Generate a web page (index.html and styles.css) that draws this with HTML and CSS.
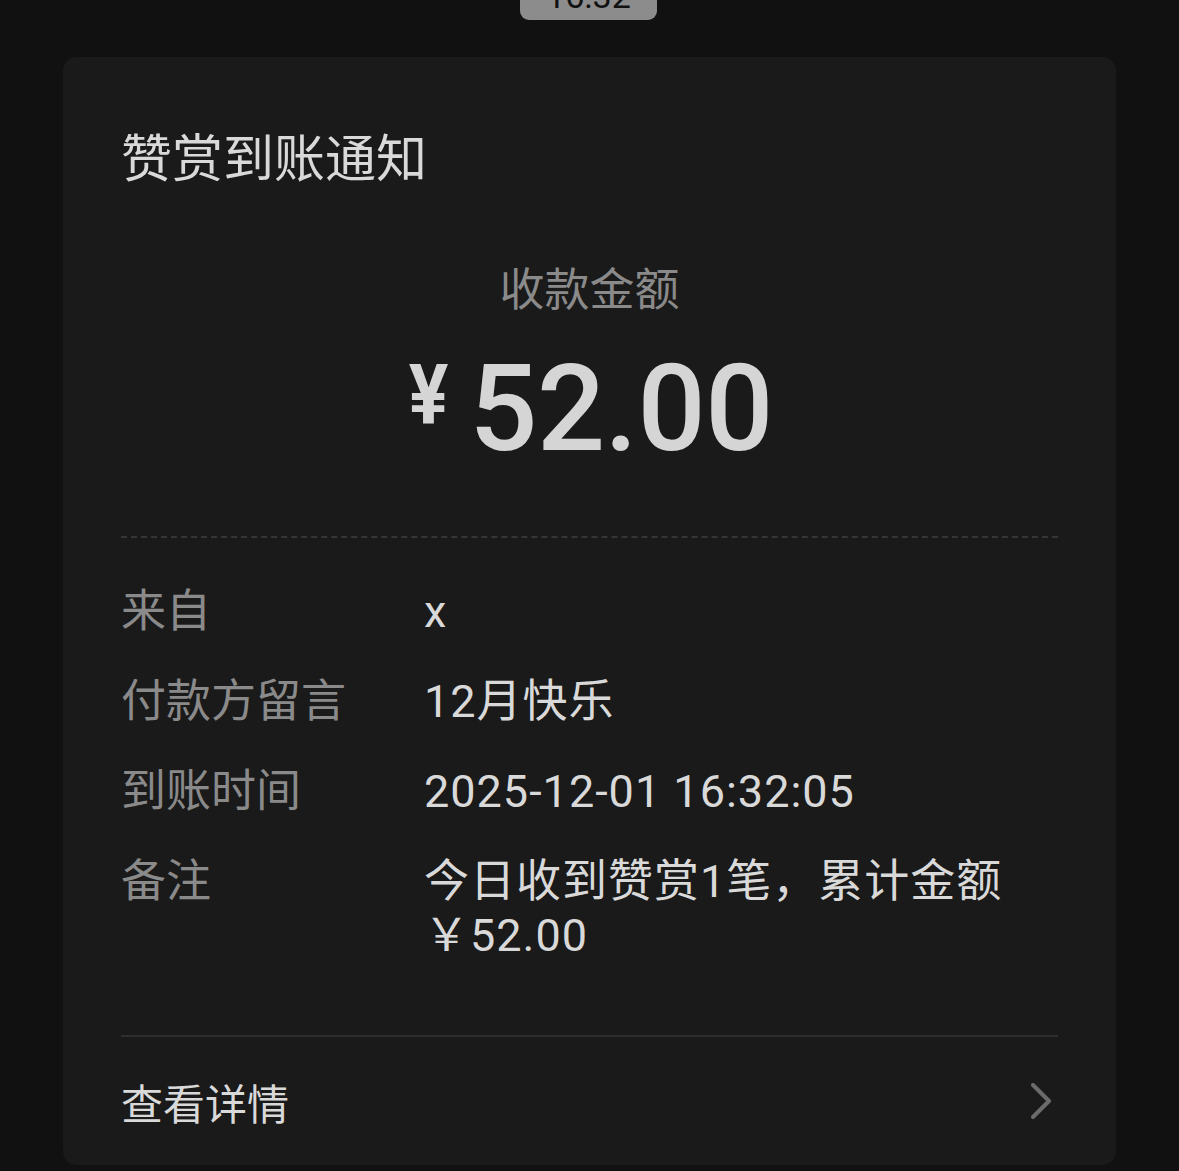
FILE: index.html
```html
<!DOCTYPE html>
<html lang="zh-CN">
<head>
    <meta charset="UTF-8">
    <meta name="viewport" content="width=device-width, initial-scale=1.0">
    <title>赞赏到账通知</title>
    <link rel="stylesheet" href="styles.css">
</head>
<body>

    <!-- Chat timestamp (scrolled partly off screen) -->
    <div class="time-pill">16:32</div>

    <!-- Notification card -->
    <div class="notice-card">
        <div class="notice-title">赞赏到账通知</div>

        <div class="amount-block">
            <div class="amount-label">收款金额</div>
            <div class="amount-value">
                <span class="yen">¥</span>
                <span class="number">52.00</span>
            </div>
        </div>

        <div class="detail-list">
            <div class="detail-label">来自</div>
            <div class="detail-value">x</div>

            <div class="detail-label">付款方留言</div>
            <div class="detail-value">12月快乐</div>

            <div class="detail-label">到账时间</div>
            <div class="detail-value">2025-12-01 16:32:05</div>

            <div class="detail-label">备注</div>
            <div class="detail-value">今日收到赞赏1笔，累计金额<span class="nowrap">￥52.00</span></div>
        </div>

        <a class="view-detail" href="#">
            <span>查看详情</span>
            <svg class="chevron" width="22" height="36" viewBox="0 0 22 36">
                <polyline points="3,2 19,18 3,34" fill="none" stroke="#6b6b6b" stroke-width="4" stroke-linecap="round" stroke-linejoin="round"/>
            </svg>
        </a>
    </div>

</body>
</html>
```

FILE: styles.css
```css
/* Basic reset */
* {
    margin: 0;
    padding: 0;
    box-sizing: border-box;
}

body {
    font-family: Roboto, "Noto Sans CJK SC", sans-serif;
    background: #111111;
    height: 1171px;
    overflow: hidden;
    display: flex;
    flex-direction: column;
    align-items: center;
}

/* Timestamp pill */
.time-pill {
    margin-top: -24px;
    height: 44px;
    width: 137px;
    margin-left: -2px;
    background: #8c8c8c;
    border-radius: 9px;
    color: #111;
    font-size: 34px;
    line-height: 40px;
    text-align: center;
}

/* Card */
.notice-card {
    margin-top: 37px;
    width: 1053px;
    background: #1a1a1a;
    border-radius: 14px;
    padding: 68px 58px 0;
}

.notice-title {
    font-size: 51px;
    line-height: 70px;
    color: #d9d9d9;
}

/* Amount */
.amount-block {
    margin-top: 66px;
    text-align: center;
    border-bottom: 2px dashed #353535;
    padding-bottom: 67px;
}

.amount-label {
    font-size: 45px;
    line-height: 60px;
    color: #8a8a8a;
}

.amount-value {
    margin-top: 28px;
    display: flex;
    justify-content: center;
    align-items: flex-start;
    color: #d5d5d5;
    line-height: 1;
}

.yen {
    font-size: 84px;
    font-weight: 700;
    margin-top: 5px;
    margin-right: 18px;
    transform: scaleX(0.88);
}

.number {
    font-size: 120px;
    font-weight: 500;
    letter-spacing: -0.5px;
}

/* Details */
.detail-list {
    display: grid;
    grid-template-columns: 303px 1fr;
    row-gap: 36px;
    padding: 47px 0 72px;
    border-bottom: 2px solid #2e2e2e;
    font-size: 45px;
    line-height: 54px;
}

.detail-label {
    color: #8a8a8a;
}

.detail-value {
    color: #d9d9d9;
    letter-spacing: 1px;
}

.nowrap {
    white-space: nowrap;
}

/* Footer link */
.view-detail {
    height: 128px;
    display: flex;
    justify-content: space-between;
    align-items: center;
    text-decoration: none;
    color: #d9d9d9;
    font-size: 42px;
}

.chevron {
    margin-right: 6px;
}
```
